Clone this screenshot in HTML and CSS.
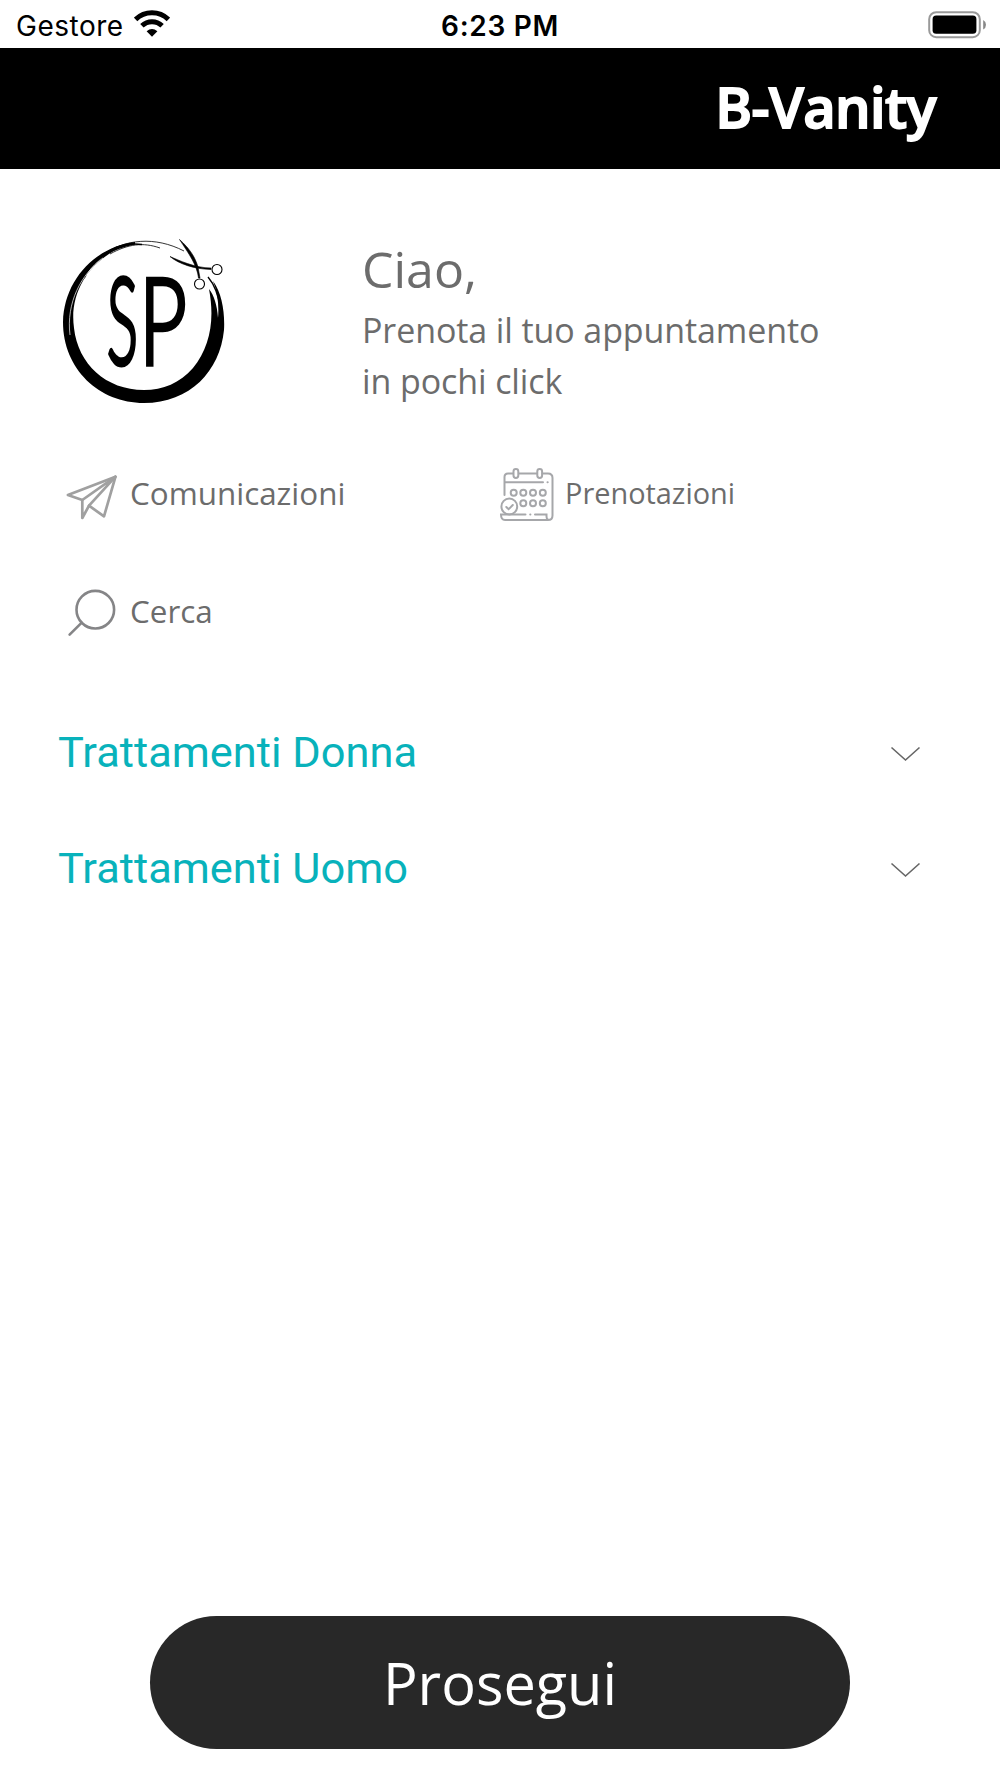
FILE: index.html
```html
<!DOCTYPE html>
<html lang="it">
<head>
  <meta charset="UTF-8" />
  <meta name="viewport" content="width=device-width, initial-scale=1.0"/>
  <title>B-Vanity</title>
  <link rel="stylesheet" href="styles.css">
</head>
<body>

  <div class="status">
    <div class="operatore">
      <span>Gestore</span>
      <svg class="wifi" viewBox="0 0 36 28">
        <path d="M1.6 9.4A23.5 23.5 0 0 1 34.4 9.4" fill="none" stroke="#000" stroke-width="4.9"/>
        <path d="M7.9 15.8A14.6 14.6 0 0 1 28.1 15.8" fill="none" stroke="#000" stroke-width="4.9"/>
        <path d="M12.6 21.2Q18 16.6 23.4 21.2L18 26.8Z"/>
      </svg>
    </div>
    <div class="ora">6:23 PM</div>
    <svg class="batteria" viewBox="0 0 60 28">
      <rect x="1.2" y="1.2" width="50.6" height="25" rx="7" fill="none" stroke="#999" stroke-width="2"/>
      <rect x="4.6" y="4.6" width="43.8" height="18.2" rx="3.5"/>
      <path d="M55.2 9Q58 10.5 58 13.7T55.2 18.5Z" fill="#888"/>
    </svg>
  </div>

  <header>
    <h1>B-Vanity</h1>
  </header>

  <main>
    <div class="intro">
      <svg class="logo" viewBox="0 0 190 190">
        <!-- cerchio a pennello -->
        <path d="M85 17C45 22 14 55 13 97C13 144 49 178 94 178C140 178 170 146 174 105C175 88 172 68 163 56C168 68 169 82 168 93C167 80 164 70 159 64C165 95 160 122 143 143C130 158 113 165 94 165C56 165 28 139 24 103C19 68 39 37 70 23C58 27 43 38 34 55C42 37 60 24 85 19.5Z"/>
        <path d="M52 30C75 14 105 11 134 26M60 29C78 19 93 17 110 23" fill="none" stroke="#000" stroke-width=".8"/>
        <path d="M65 23C75 19 83 18 92 19.5" fill="none" stroke="#000" stroke-width="1.5"/>
        <path d="M20 110C16 78 31 49 53 33" fill="none" stroke="#fff" stroke-width=".7"/>
        <path d="M158 52C165 60 169 72 171 86" fill="none" stroke="#000" stroke-width="1.4"/>
        <!-- forbici -->
        <path d="M129.5 14.5C140 24 145 32 148 42L150 53L148.5 53C147 40 139 29 129.5 14.5Z" stroke="#000" stroke-width=".6"/>
        <path d="M120 31.5C128 35 145 43 161 43L161 44.5C144 44 129 39 120 31.5Z" stroke="#000" stroke-width=".6"/>
        <circle cx="149.5" cy="59" r="5" fill="none" stroke="#000" stroke-width="1.1"/>
        <circle cx="167" cy="44.5" r="5" fill="none" stroke="#000" stroke-width="1.1"/>
        <text class="sigla" transform="translate(57 138.5) scale(.48 1)">S</text>
        <text class="sigla" transform="translate(89 138.5) scale(.69 1)">P</text>
      </svg>
      <div class="saluto">
        <h2>Ciao,</h2>
        <p>Prenota il tuo appuntamento<br>in pochi click</p>
      </div>
    </div>

    <nav>
      <a class="comunicazioni">
        <svg viewBox="0 0 56 56" fill="none" stroke="#a0a0a0" stroke-width="2.7" stroke-linejoin="round" stroke-linecap="round">
          <path d="M50.500 12.700L2.900 31L17.300 36V54L24 41.700L39 52.300Z"/>
          <path d="M50.500 12.700L17.300 36M50.500 12.700L24 41.700"/>
        </svg>
        <span>Comunicazioni</span>
      </a>
      <a class="prenotazioni">
        <svg viewBox="0 0 56 56" fill="none" stroke="#a6a7aa" stroke-width="2" stroke-linecap="round">
          <path d="M5.500 31V13Q5.500 9.500 9 9.500H14M20 9.500H38M43.500 9.500H49Q53.500 9.500 53.500 14V51.500Q53.500 56 49 56H6Q2 56 2 50.500H26.500M36 50.500H47.500V52Q47.500 56 50 56"/>
          <path d="M6 18.200H44M48.500 18.200H48.700M31.200 50.500H31.400"/>
          <rect x="14.500" y="5" width="4.800" height="9" rx="2.400"/>
          <rect x="38.300" y="5" width="4.800" height="9" rx="2.400"/>
          <circle cx="14.700" cy="28.700" r="3"/>
          <circle cx="24.300" cy="28.700" r="3"/>
          <circle cx="34" cy="28.700" r="3"/>
          <circle cx="43.800" cy="28.700" r="3"/>
          <circle cx="24.300" cy="39.300" r="3"/>
          <circle cx="34" cy="39.300" r="3"/>
          <circle cx="43.800" cy="39.300" r="3"/>
          <circle cx="10.300" cy="42.500" r="7.900"/>
          <path d="M7.300 43L9.600 45.200L13.800 41"/>
        </svg>
        <span>Prenotazioni</span>
      </a>
      <a class="cerca">
        <svg viewBox="0 0 56 56" fill="none" stroke="#858587" stroke-width="2.6" stroke-linecap="round">
          <circle cx="30.300" cy="26.700" r="18.800"/>
          <path d="M16.700 39.700L4.600 51.700"/>
        </svg>
        <span>Cerca</span>
      </a>
    </nav>

    <section class="trattamenti">
      <div class="voce">
        <span>Trattamenti Donna</span>
        <svg viewBox="0 0 30 16"><path d="M1 1.500L15 14L29 1.500"/></svg>
      </div>
      <div class="voce">
        <span>Trattamenti Uomo</span>
        <svg viewBox="0 0 30 16"><path d="M1 1.500L15 14L29 1.500"/></svg>
      </div>
    </section>
  </main>

  <footer>
    <button>Prosegui</button>
  </footer>

</body>
</html>
```
FILE: styles.css
```css
* {
  box-sizing: border-box;
}

body {
  margin: 0;
  height: 1778px;
  display: flex;
  flex-direction: column;
  background-color: #fff;
  color: #6c6c6c;
  font-family: "Open Sans", sans-serif;
}

.status {
  height: 48px;
  padding: 3px 12px 0 16px;
  display: grid;
  grid-template-columns: 1fr auto 1fr;
  align-items: center;
  color: #000;
  font-family: Inter, sans-serif;
  font-size: 28px;
}

.operatore {
  display: flex;
  align-items: center;
  gap: 10px;
  letter-spacing: 0.5px;
}

.wifi {
  width: 36px;
  height: 28px;
  margin-bottom: 4px;
}

.ora {
  font-weight: 600;
  letter-spacing: 0.7px;
  margin-right: 4px;
}

.batteria {
  width: 60px;
  height: 28px;
  margin-bottom: 2px;
  justify-self: end;
}

header {
  height: 121px;
  padding: 0 64px 6px 0;
  display: flex;
  align-items: center;
  justify-content: flex-end;
  background-color: #000;
}

h1 {
  margin: 0;
  color: #fff;
  font-size: 56px;
  font-weight: 600;
  letter-spacing: -0.6px;
  -webkit-text-stroke: 1.8px #fff;
}

.intro {
  display: flex;
  padding: 56px 0 0 50px;
  height: 264px;
}

.logo {
  width: 190px;
  height: 190px;
  margin-right: 122px;
}

.sigla {
  font-family: Lato, sans-serif;
  font-size: 120px;
  font-weight: 300;
  stroke: #000;
  stroke-width: 4px;
  vector-effect: non-scaling-stroke;
}

.saluto {
  padding-top: 8px;
}

h2 {
  margin: 0;
  font-size: 50px;
  font-weight: 400;
  line-height: 72px;
}

p {
  margin: 0;
  font-size: 34px;
  letter-spacing: -0.1px;
  line-height: 50.5px;
}

nav {
  display: grid;
  grid-template-columns: 434px 1fr;
  grid-auto-rows: 118.5px;
  padding-left: 65px;
}

nav a {
  display: flex;
  align-items: center;
  gap: 9px;
  font-size: 31.4px;
}

nav svg {
  width: 56px;
  height: 56px;
  overflow: visible;
}

nav .comunicazioni span {
  padding-top: 1px;
}

.prenotazioni {
  gap: 10px;
  font-size: 28.9px;
}

.prenotazioni span {
  padding-top: 1px;
}

.trattamenti {
  padding: 24px 79px 0 58px;
}

.voce {
  height: 116px;
  display: flex;
  align-items: center;
  justify-content: space-between;
  color: #08b2bb;
  font-family: Roboto, sans-serif;
  font-size: 43.4px;
}

.voce svg {
  width: 31px;
  height: 16px;
  margin-top: 3px;
  fill: none;
  stroke: #666;
  stroke-width: 1.6;
}

footer {
  margin-top: auto;
  padding-bottom: 29px;
  text-align: center;
}

button {
  width: 700px;
  height: 133px;
  border: none;
  border-radius: 67px;
  background-color: #282828;
  color: #fff;
  font-family: "Open Sans", sans-serif;
  font-size: 57.7px;
}
```
